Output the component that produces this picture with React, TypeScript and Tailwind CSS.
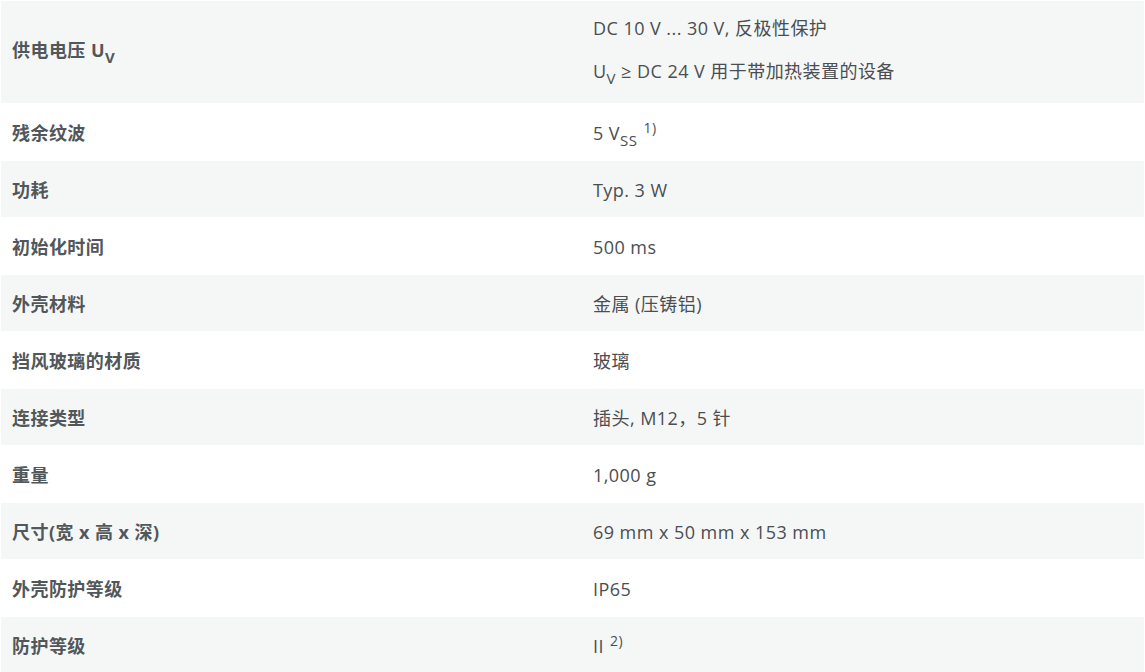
import type { ReactNode } from 'react';

// 技术参数表
interface SpecRow {
  label: ReactNode;
  value: ReactNode;
  tall?: boolean;
}

const Sub = ({ children }: { children: ReactNode }) => (
  <span className="relative top-[6px] text-[15px] leading-none">{children}</span>
);

const Sup = ({ children }: { children: ReactNode }) => (
  <span className="relative -top-[7px] ml-[6px] text-[14px] leading-none">{children}</span>
);

const rows: SpecRow[] = [
  {
    label: (
      <div className="pb-[4px]">
        供电电压 U<Sub>V</Sub>
      </div>
    ),
    value: (
      <div className="flex flex-col gap-[16px] pb-[4px]">
        <p>DC 10 V ... 30 V, 反极性保护</p>
        <p>
          U<Sub>V</Sub> ≥ DC 24 V 用于带加热装置的设备
        </p>
      </div>
    ),
    tall: true,
  },
  {
    label: '残余纹波',
    value: (
      <>
        5 V<Sub>SS</Sub>
        <Sup>1)</Sup>
      </>
    ),
  },
  { label: '功耗', value: 'Typ. 3 W' },
  { label: '初始化时间', value: '500 ms' },
  { label: '外壳材料', value: '金属 (压铸铝)' },
  { label: '挡风玻璃的材质', value: '玻璃' },
  { label: '连接类型', value: '插头, M12，5 针' },
  { label: '重量', value: '1,000 g' },
  { label: '尺寸(宽 x 高 x 深)', value: '69 mm x 50 mm x 153 mm' },
  { label: '外壳防护等级', value: 'IP65' },
  {
    label: '防护等级',
    value: (
      <>
        II<Sup>2)</Sup>
      </>
    ),
  },
];

export default function App() {
  return (
    <div
      className="min-h-screen bg-white p-px text-[18px] leading-[27px] tracking-[0.45px]"
      style={{ fontFamily: '"Open Sans", "Noto Sans CJK SC", sans-serif' }}
    >
      <div className="flex flex-col gap-px">
        {rows.map((row, i) => (
          <div
            key={i}
            className={`flex items-center ${row.tall ? 'h-[102px]' : 'h-[56px] pt-[3px]'} ${
              i % 2 === 0 ? 'bg-[#f5f7f7]' : 'bg-white'
            }`}
          >
            {/* 参数名 */}
            <div className="w-[580px] shrink-0 pl-[11px] font-bold text-[#52575b]">{row.label}</div>
            {/* 参数值 */}
            <div className="flex-1 pl-[12px] text-[#4a4e51]">{row.value}</div>
          </div>
        ))}
      </div>
    </div>
  );
}
